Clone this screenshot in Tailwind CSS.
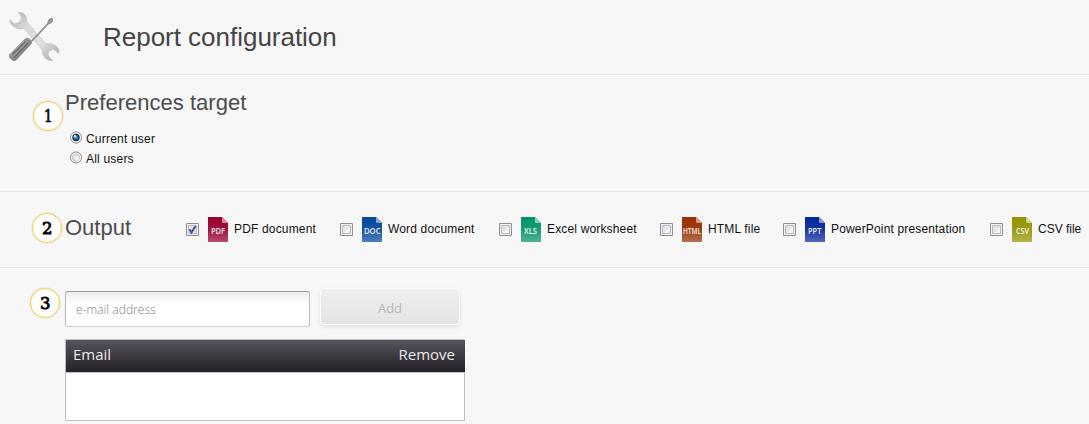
<!DOCTYPE html>
<html lang="en">
<head>
<meta charset="utf-8">
<title>Report configuration</title>
<script src="https://cdn.jsdelivr.net/npm/@tailwindcss/browser@4"></script>
</head>
<body class="w-[1089px] h-[424px] overflow-hidden bg-[#f7f7f7] font-['Liberation_Sans',sans-serif] text-[#444]">
<svg class="absolute size-0">
  <defs>
    <linearGradient id="shine" x1="0" y1="0" x2="0" y2="1"><stop offset="0" stop-color="#fff" stop-opacity="0"/><stop offset=".45" stop-color="#fff" stop-opacity=".06"/><stop offset="1" stop-color="#fff" stop-opacity=".3"/></linearGradient>
  </defs>
</svg>
<header class="h-[75px] border-b border-[#e5e5e5] flex items-center">
  <svg class="ml-2 w-[54px] h-[52px] shrink-0" viewBox="8 11 54 52">
    <defs>
      <linearGradient id="steel" x1="0" y1="0" x2="1" y2="1"><stop offset="0" stop-color="#aaa"/><stop offset=".3" stop-color="#d8d8d8"/><stop offset=".65" stop-color="#e0e0e0"/><stop offset="1" stop-color="#a4a4a4"/></linearGradient>
      <linearGradient id="grip" x1="0" y1="0" x2="1" y2="1"><stop offset="0" stop-color="#c4c4c4"/><stop offset=".5" stop-color="#8c8c8c"/><stop offset="1" stop-color="#707070"/></linearGradient>
    </defs>
    <path d="M18.500 12.300 C24 12 27.500 16 26.800 22 L45.800 43.800 C51 42.500 57 45 59 50 L58.700 53.500 L53.300 49.200 L48.600 51 L48.300 55.500 L52.700 60.600 C47 61 42 57 42.400 50 L24 28.400 C17 30 10.500 26.500 9.700 19.700 L14.600 24 L20 22 L21.500 17.300 Z" fill="url(#steel)" stroke="#c0c0c0" stroke-width=".6"/>
    <path d="M31 40.500 L47.300 23.200 L48 20 L51 17.700 L53 18.600 L53 21.500 L50.500 23.800 L48.400 24.500 L32.500 41.500 Z" fill="#929292"/>
    <path d="M24.800 38.700 Q27 37 29.500 38.800 Q33 41 31.800 43.500 L16.500 60 Q14 62.300 11.200 59.500 Q7.500 56.500 9.600 54.300 Z" fill="url(#grip)"/>
    <path d="M12.500 54.500 L25.700 41.400 M14.500 57 L28 43" stroke="#666" stroke-width="1.100"/>
    <path d="M11 53.500 L24.500 40.400 M13.500 56 L27 42.400" stroke="#bbb" stroke-width=".6"/>
  </svg>
  <h1 class="ml-[41px] text-[26px] leading-[30px] tracking-[-0.02px]">Report configuration</h1>
</header>

<section class="h-[117px] border-b border-[#e5e5e5] flex">
  <div class="ml-[33px] mt-[26px] size-[30px] shrink-0 rounded-full border-[1.5px] border-[#f4d83c] bg-white shadow-[0_0_2px_#ccc] flex items-center justify-center"><svg class="w-[12px] h-[20px] overflow-visible" viewBox="0 0 12 20"><text x="2" y="15.500" stroke="#000" stroke-width=".7" class="font-['DejaVu_Serif',serif] text-[16px]" textLength="8.500" lengthAdjust="spacingAndGlyphs">1</text></svg></div>
  <div class="ml-[2px] pt-[15px]">
    <h2 class="text-[22px] leading-[26px] tracking-[0.02px] text-[#4c4c4c]">Preferences target</h2>
    <div class="mt-[13px] ml-[5px] text-[12px] leading-5 text-[#111] tracking-[0.2px]">
      <label class="flex items-center h-5"><svg class="size-[13px] mr-[3px] -mt-[3px]" viewBox="0 0 13 13"><circle cx="6" cy="6.500" r="5.600" fill="#f4f4f4" stroke="#8f8f8f"/><circle cx="6" cy="6.500" r="3.700" fill="#12324c"/><circle cx="5.800" cy="6.300" r="2.400" fill="#2687b4"/><circle cx="5" cy="5.300" r="1.200" fill="#b8e6f5"/></svg>Current user</label>
      <label class="flex items-center h-5"><svg class="size-[13px] mr-[3px] -mt-[3px]" viewBox="0 0 13 13"><circle cx="6" cy="6.500" r="5.600" fill="#f4f4f4" stroke="#8f8f8f"/><circle cx="6" cy="6.500" r="3.800" fill="#dedfe1" stroke="#c0c2c5" stroke-width=".8"/><circle cx="7" cy="7.500" r="2.200" fill="#f0f0f0"/></svg>All users</label>
    </div>
  </div>
</section>

<section class="h-[76px] border-b border-[#e5e5e5] flex">
  <div class="ml-8 mt-[21px] size-[30px] shrink-0 rounded-full border-[1.5px] border-[#f4d83c] bg-white shadow-[0_0_2px_#ccc] flex items-center justify-center"><svg class="w-[12px] h-[20px] overflow-visible" viewBox="0 0 12 20"><text x="1" y="15.500" stroke="#000" stroke-width=".8" class="font-['DejaVu_Serif',serif] text-[16px]" textLength="10.500" lengthAdjust="spacingAndGlyphs">2</text></svg></div>
  <h2 class="ml-[3px] mt-[23px] w-[121px] text-[22px] leading-[26px] text-[#4c4c4c]">Output</h2>
  <div class="mt-[25px] h-[25px] grid grid-cols-[154px_159px_161px_123px_207px_99px] text-[12px] leading-[25px] text-[#111] tracking-[0.16px] whitespace-nowrap">
    <label class="flex"><svg class="mt-[6px] size-[13px] mr-[9px]" viewBox="0 0 13 13"><path d="M.5.5h12v12H.5z" fill="#f4f4f4" stroke="#8e8f8f"/><path d="M2.500 2.500h8v8h-8z" fill="#e6e8ec" stroke="#b8bcc2"/><path d="M3.500 6.300 5.500 9.500 9.600 3" fill="none" stroke="#3d5298" stroke-width="2"/></svg><svg class="w-5 h-[25px] mr-1.5" viewBox="0 0 20 25"><path d="M0 0h14l6 6v19H0z" fill="#96002f"/><path d="M0 0h14l6 6v19H0z" fill="url(#shine)"/><path d="M14 0l6 6h-5q-1 0-1-1z" fill="#d88da6"/><text x="3" y="17.300" textLength="14" lengthAdjust="spacingAndGlyphs" fill="#f9e7ed" class="font-['Open_Sans',sans-serif] text-[9px] font-semibold tracking-normal">PDF</text></svg>PDF document</label>
    <label class="flex"><svg class="mt-[6px] size-[13px] mr-[9px]" viewBox="0 0 13 13"><path d="M.5.5h12v12H.5z" fill="#f4f4f4" stroke="#8e8f8f"/><path d="M2.500 2.500h8v8h-8z" fill="#e2e4e8" stroke="#b8bcc2"/><path d="M10 4v6H4z" fill="#f5f5f6"/></svg><svg class="w-5 h-[25px] mr-1.5" viewBox="0 0 20 25"><path d="M0 0h14l6 6v19H0z" fill="#03479b"/><path d="M0 0h14l6 6v19H0z" fill="url(#shine)"/><path d="M14 0l6 6h-5q-1 0-1-1z" fill="#83a8d5"/><text x="2" y="17.300" textLength="16.500" lengthAdjust="spacingAndGlyphs" fill="#e8f0fa" class="font-['Open_Sans',sans-serif] text-[9px] font-semibold tracking-normal">DOC</text></svg>Word document</label>
    <label class="flex"><svg class="mt-[6px] size-[13px] mr-[9px]" viewBox="0 0 13 13"><path d="M.5.5h12v12H.5z" fill="#f4f4f4" stroke="#8e8f8f"/><path d="M2.500 2.500h8v8h-8z" fill="#e2e4e8" stroke="#b8bcc2"/><path d="M10 4v6H4z" fill="#f5f5f6"/></svg><svg class="w-5 h-[25px] mr-1.5" viewBox="0 0 20 25"><path d="M0 0h14l6 6v19H0z" fill="#05936a"/><path d="M0 0h14l6 6v19H0z" fill="url(#shine)"/><path d="M14 0l6 6h-5q-1 0-1-1z" fill="#85d4bb"/><text x="3" y="17.300" textLength="13" lengthAdjust="spacingAndGlyphs" fill="#e6f8f2" class="font-['Open_Sans',sans-serif] text-[9px] font-semibold tracking-normal">XLS</text></svg>Excel worksheet</label>
    <label class="flex"><svg class="mt-[6px] size-[13px] mr-[9px]" viewBox="0 0 13 13"><path d="M.5.5h12v12H.5z" fill="#f4f4f4" stroke="#8e8f8f"/><path d="M2.500 2.500h8v8h-8z" fill="#e2e4e8" stroke="#b8bcc2"/><path d="M10 4v6H4z" fill="#f5f5f6"/></svg><svg class="w-5 h-[25px] mr-1.5 overflow-visible" viewBox="0 0 20 25"><path d="M0 0h14l6 6v19H0z" fill="#983003"/><path d="M0 0h14l6 6v19H0z" fill="url(#shine)"/><path d="M14 0l6 6h-5q-1 0-1-1z" fill="#d69b81"/><text x="1" y="17.300" textLength="18" lengthAdjust="spacingAndGlyphs" fill="#fbede6" class="font-['Open_Sans',sans-serif] text-[8px] font-semibold tracking-normal">HTML</text></svg>HTML file</label>
    <label class="flex"><svg class="mt-[6px] size-[13px] mr-[9px]" viewBox="0 0 13 13"><path d="M.5.5h12v12H.5z" fill="#f4f4f4" stroke="#8e8f8f"/><path d="M2.500 2.500h8v8h-8z" fill="#e2e4e8" stroke="#b8bcc2"/><path d="M10 4v6H4z" fill="#f5f5f6"/></svg><svg class="w-5 h-[25px] mr-1.5" viewBox="0 0 20 25"><path d="M0 0h14l6 6v19H0z" fill="#06269a"/><path d="M0 0h14l6 6v19H0z" fill="url(#shine)"/><path d="M14 0l6 6h-5q-1 0-1-1z" fill="#8797d3"/><text x="3" y="17.300" textLength="13.500" lengthAdjust="spacingAndGlyphs" fill="#e9ecf9" class="font-['Open_Sans',sans-serif] text-[9px] font-semibold tracking-normal">PPT</text></svg>PowerPoint presentation</label>
    <label class="flex"><svg class="mt-[6px] size-[13px] mr-[9px]" viewBox="0 0 13 13"><path d="M.5.5h12v12H.5z" fill="#f4f4f4" stroke="#8e8f8f"/><path d="M2.500 2.500h8v8h-8z" fill="#e2e4e8" stroke="#b8bcc2"/><path d="M10 4v6H4z" fill="#f5f5f6"/></svg><svg class="w-5 h-[25px] mr-1.5" viewBox="0 0 20 25"><path d="M0 0h14l6 6v19H0z" fill="#949302"/><path d="M0 0h14l6 6v19H0z" fill="url(#shine)"/><path d="M14 0l6 6h-5q-1 0-1-1z" fill="#d4d48a"/><text x="4" y="17.300" textLength="13" lengthAdjust="spacingAndGlyphs" fill="#fafae6" class="font-['Open_Sans',sans-serif] text-[8px] font-semibold tracking-normal">CSV</text></svg><span class="tracking-[-0.02px]">CSV file</span></label>
  </div>
</section>

<section class="flex">
  <div class="ml-[30px] mt-5 size-[30px] shrink-0 rounded-full border-[1.5px] border-[#f4d83c] bg-white shadow-[0_0_2px_#ccc] flex items-center justify-center"><svg class="w-[12px] h-[20px] overflow-visible" viewBox="0 0 12 20"><text x="1" y="15.500" stroke="#000" stroke-width=".8" class="font-['DejaVu_Serif',serif] text-[16px]" textLength="10.500" lengthAdjust="spacingAndGlyphs">3</text></svg></div>
  <div class="ml-[5px] pt-5">
    <div class="flex">
      <div class="mt-[3px] w-[245px] h-9 rounded-[3px] border border-[#b9b9b9] border-t-[#999] border-b-[#ccc] bg-linear-to-b from-[#eee] to-white to-35% pl-2.5 font-['Open_Sans',sans-serif] font-light text-[12px] leading-[35px] text-[#808080]"><span class="tracking-[0.05px]">e-mail address</span></div>
      <div class="ml-[10px] w-[140px] h-[37px] rounded-[4px] border border-[#fbfbfb] bg-linear-to-b from-[#efefef] to-[#e4e4e4] shadow-[0_2px_4px_#e2e2e2] text-center font-['Open_Sans',sans-serif] text-[13px] leading-[39px] text-[#b5b5b5]">Add</div>
    </div>
    <div class="mt-3 w-[400px] h-[82px] border border-[#bfbfbf] bg-white">
      <div class="-mr-px h-[33px] border-b border-[#bfbfbf] bg-linear-to-b from-[#57545d] to-[#242228] flex justify-between pl-[7px] pr-[10px] font-['Open_Sans',sans-serif] text-[15px] leading-[29px] text-[#e8e8ea]"><span>Email</span><span>Remove</span></div>
    </div>
  </div>
</section>
</body>
</html>
